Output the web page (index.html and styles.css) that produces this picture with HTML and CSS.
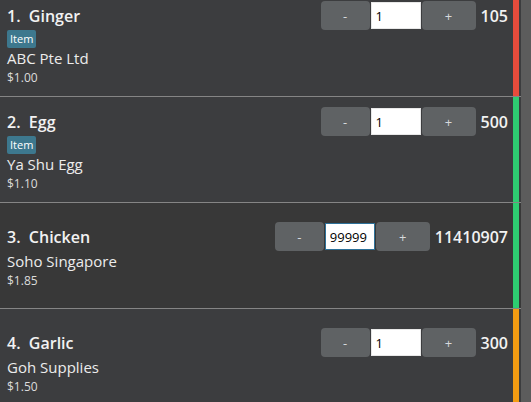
FILE: index.html
```html
<!DOCTYPE html>
<html>
<head>
<meta charset="utf-8">
<link rel="stylesheet" href="styles.css">
</head>
<body>
<div class="view">
  <div class="list">
    <div class="scroller">
      <div class="row odd">
        <div class="cell">
          <div class="header">
            <span class="title">1.  Ginger</span>
            <div class="qty">
              <button class="btn minus">-</button>
              <input class="field" value="1">
              <button class="btn plus">+</button>
            </div>
            <span class="stock">105</span>
          </div>
          <span class="badge">Item</span>
          <div class="supplier">ABC Pte Ltd</div>
          <div class="price">$1.00</div>
        </div>
        <div class="stripe red"></div>
      </div>
      <div class="row even">
        <div class="cell">
          <div class="header">
            <span class="title">2.  Egg</span>
            <div class="qty">
              <button class="btn minus">-</button>
              <input class="field" value="1">
              <button class="btn plus">+</button>
            </div>
            <span class="stock">500</span>
          </div>
          <span class="badge">Item</span>
          <div class="supplier">Ya Shu Egg</div>
          <div class="price">$1.10</div>
        </div>
        <div class="stripe green"></div>
      </div>
      <div class="row odd alt">
        <div class="cell">
          <div class="header">
            <span class="title">3.  Chicken</span>
            <div class="qty">
              <button class="btn minus">-</button>
              <input class="field focused" value="99999">
              <button class="btn plus">+</button>
            </div>
            <span class="stock">11410907</span>
          </div>
          <div class="supplier">Soho Singapore</div>
          <div class="price">$1.85</div>
        </div>
        <div class="stripe green"></div>
      </div>
      <div class="row even">
        <div class="cell">
          <div class="header">
            <span class="title">4.  Garlic</span>
            <div class="qty">
              <button class="btn minus">-</button>
              <input class="field" value="1">
              <button class="btn plus">+</button>
            </div>
            <span class="stock">300</span>
          </div>
          <div class="supplier">Goh Supplies</div>
          <div class="price">$1.50</div>
        </div>
        <div class="stripe orange"></div>
      </div>
    </div>
  </div>
  <div class="scrollbar"></div>
</div>
</body>
</html>
```

FILE: styles.css
```css
html, body {
  margin: 0;
  padding: 0;
  background: #3c3d3f;
  height: 100%;
  overflow: hidden;
  font-family: "Open Sans", "Noto Sans", sans-serif;
}
.view {
  display: flex;
  height: 402px;
}
.list {
  flex: 1;
  overflow: hidden;
}
.scroller {
  margin-top: -9px;
}
.row {
  display: flex;
  height: 105px;
  border-bottom: 1px solid #858585;
  background: #3c3d3f;
  padding-right: 2px;
}
.row.alt {
  background: #383838;
}
.cell {
  flex: 1;
  display: flex;
  flex-direction: column;
  justify-content: center;
  align-items: flex-start;
  padding: 0 5px 0 7px;
}
.header {
  align-self: stretch;
  display: flex;
  align-items: center;
  height: 29px;
}
.title {
  flex: 1;
  white-space: pre;
  font-weight: 600;
  font-size: 16px;
  color: #f2f2f2;
}
.qty {
  display: flex;
  align-items: center;
  gap: 1px;
  margin-right: 5px;
}
.btn {
  height: 29px;
  border: none;
  border-radius: 4px;
  background: #5f6264;
  color: #d6d9dc;
  font-family: "Open Sans", sans-serif;
  font-size: 13px;
  padding: 0;
}
.minus { width: 49px; }
.plus { width: 54px; }
.field {
  width: 50px;
  height: 27px;
  box-sizing: border-box;
  border: 1px solid #e8e8e8;
  background: #fff;
  color: #000;
  font-family: "Open Sans", sans-serif;
  font-size: 13px;
  padding: 0 4px;
  outline: none;
}
.field.focused {
  border-color: #2d7199;
}
.stock {
  font-weight: 600;
  font-size: 16px;
  color: #f2f2f2;
}
.badge {
  display: inline-block;
  background: #3d788e;
  color: #fff;
  font-size: 11px;
  line-height: 18px;
  height: 18px;
  padding: 0 3px;
  border-radius: 2px;
}
.supplier {
  font-size: 15px;
  line-height: 21px;
  color: #ececec;
}
.price {
  font-size: 12px;
  line-height: 17px;
  color: #dcdcdc;
}
.stripe {
  width: 6px;
}
.red { background: #e74c3c; }
.green { background: #2ecc71; }
.orange { background: #f39c12; }
.scrollbar {
  width: 10px;
  background: #5c5c5c;
}
```
